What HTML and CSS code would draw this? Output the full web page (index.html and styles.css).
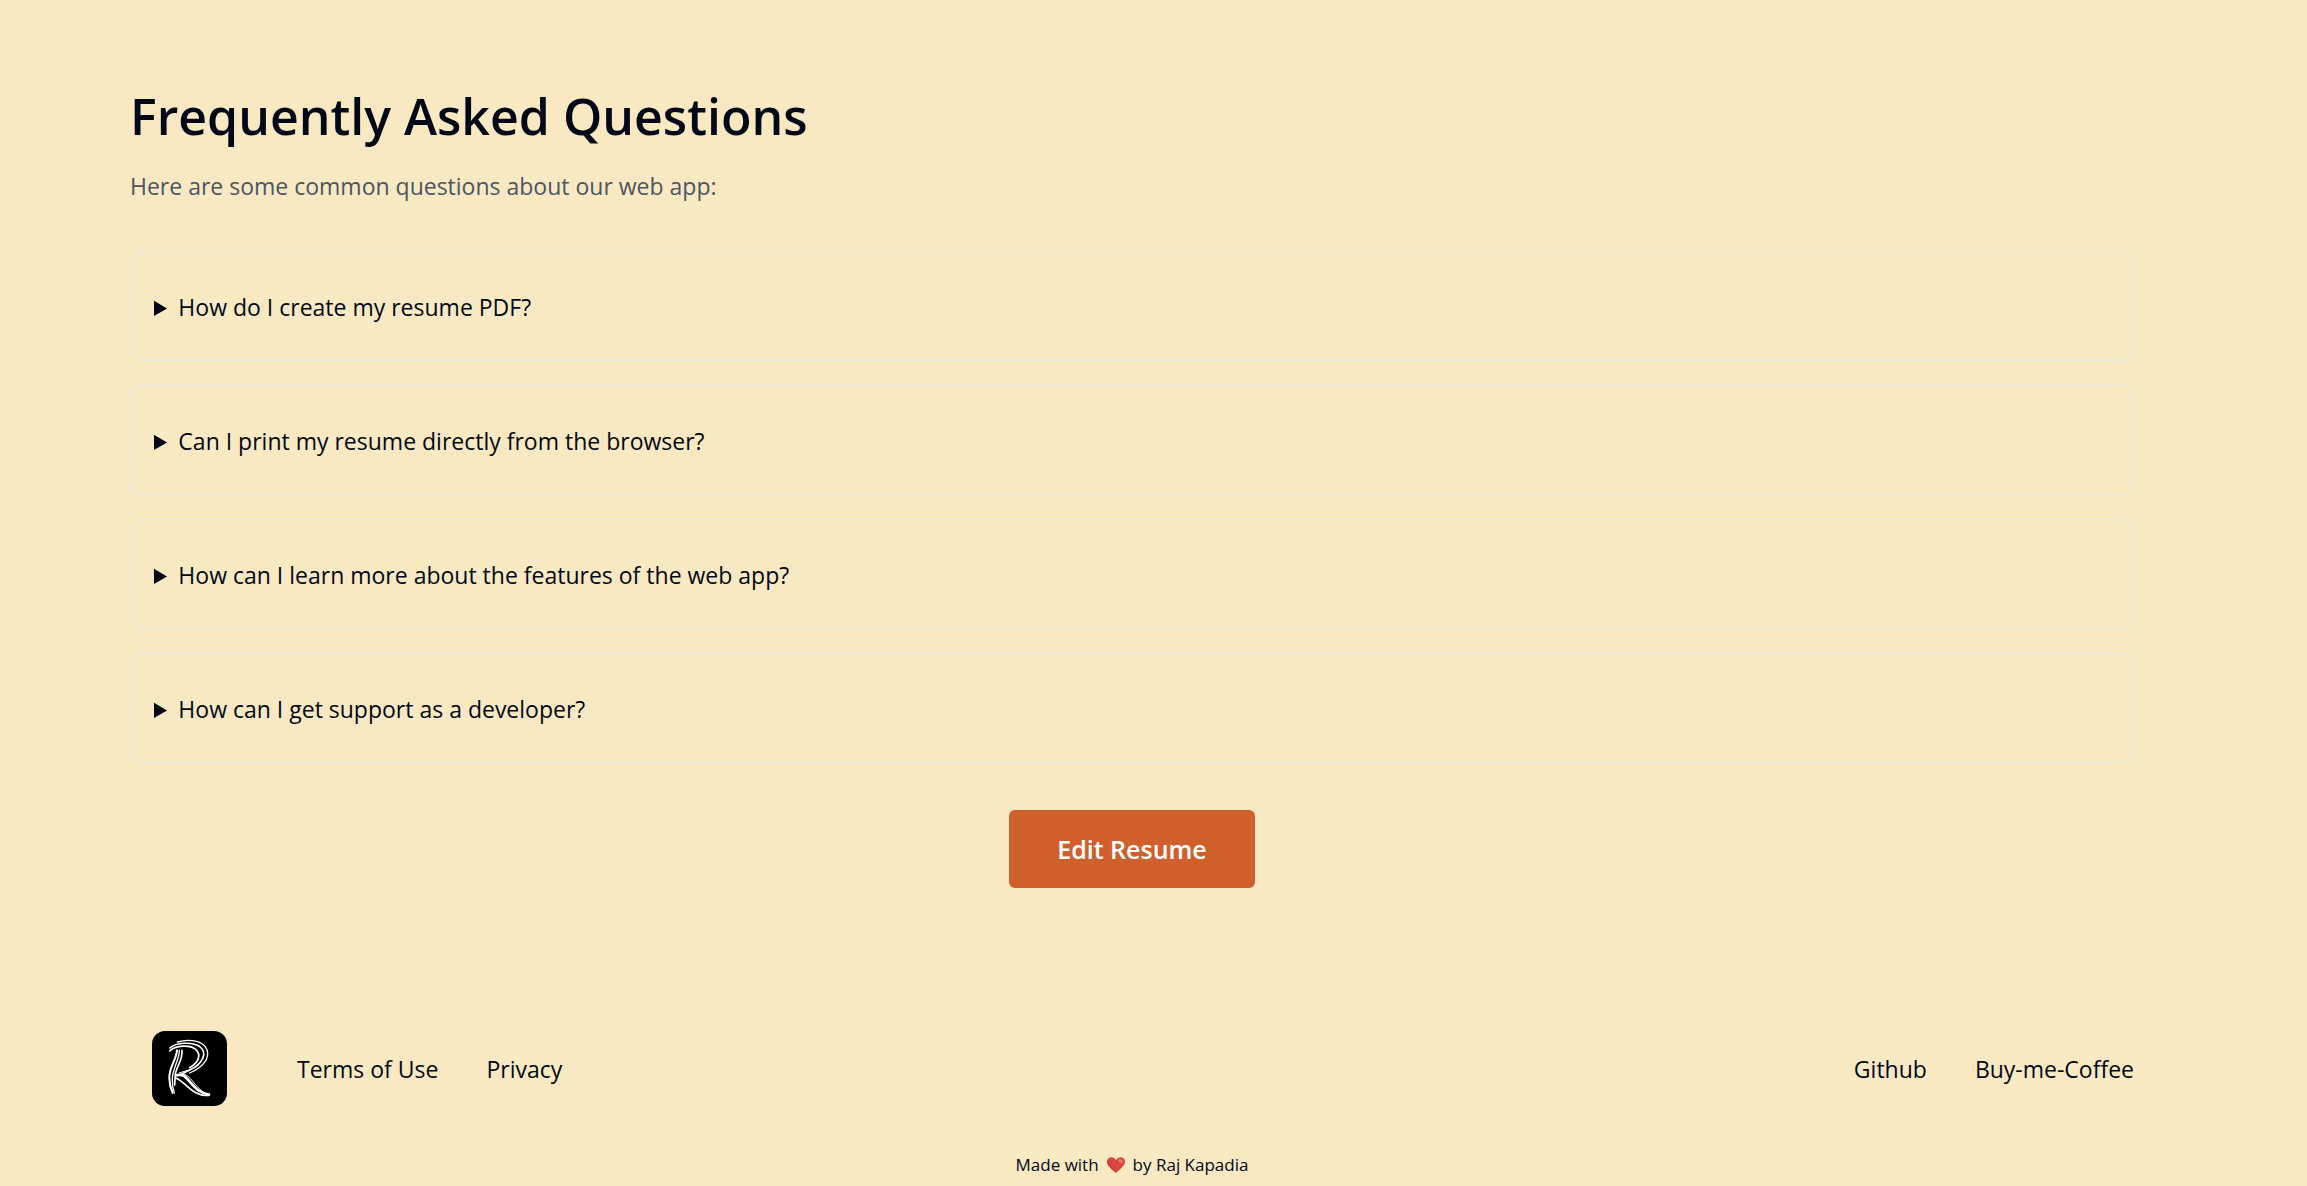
FILE: index.html
```html
<!DOCTYPE html>
<html lang="en">
<head>
<meta charset="utf-8">
<meta name="viewport" content="width=device-width, initial-scale=1">
<title>Frequently Asked Questions</title>
<link rel="stylesheet" href="styles.css">
</head>
<body>
<main class="faq">
  <h1 class="faq-title">Frequently Asked Questions</h1>
  <p class="faq-intro">Here are some common questions about our web app:</p>
  <div class="faq-list">
    <details class="card"><summary class="question">How do I create my resume PDF?</summary></details>
    <details class="card"><summary class="question">Can I print my resume directly from the browser?</summary></details>
    <details class="card"><summary class="question">How can I learn more about the features of the web app?</summary></details>
    <details class="card"><summary class="question">How can I get support as a developer?</summary></details>
  </div>
  <button class="edit-button" type="button">Edit Resume</button>
</main>
<footer class="footer">
  <div class="footer-row">
    <a class="logo" href="#" aria-label="Home">
      <svg class="logo-image" viewBox="36 36 225 225" aria-hidden="true">
        <rect x="36" y="36" width="225" height="225" rx="39" fill="#000"/>
        <g fill="none" stroke="#fff" stroke-linecap="round" stroke-linejoin="round">
          <path stroke-width="4" d="M112 69C150 58 190 66 201 92C210 119 188 146 149 162"/>
          <path stroke-width="5" d="M90 87C108 70 155 68 178 82C204 99 189 136 149 153L121 167"/>
          <path stroke-width="5" d="M89 96C108 78 150 77 167 91C186 108 174 132 149 146"/>
          <path stroke-width="6" d="M111 94C108 126 87 143 88 177C88 197 93 211 98 222"/>
          <path stroke-width="4" d="M118 94C118 124 98 147 97 179C96 196 100 213 103 222"/>
          <path stroke-width="5" d="M126 94C129 121 109 144 106 166L104 198"/>
          <path stroke-width="8" d="M109 169C130 163 137 174 151 190C169 210 181 223 207 227"/>
          <path stroke-width="5" d="M107 177C130 186 146 211 168 221C181 228 193 231 206 229"/>
          <path stroke-width="3" d="M127 163C147 168 157 187 171 202C179 211 187 218 195 222"/>
          <path stroke-width="3" d="M117 162L153 151"/>
        </g>
      </svg>
    </a>
    <nav class="links" aria-label="Legal">
      <a href="#">Terms of Use</a>
      <a href="#">Privacy</a>
    </nav>
    <nav class="links links-end" aria-label="Project">
      <a href="#">Github</a>
      <a href="#">Buy-me-Coffee</a>
    </nav>
  </div>
  <p class="credit">
    <span>Made with</span>
    <svg class="heart" viewBox="0 0 18 16" role="img" aria-label="love">
      <path fill="#d9453d" d="M9 16C6 13 0 9 0 4.600C0 2 2 .3 4.300.3C6.400.3 8 1.400 9 3.200C10 1.400 11.600.3 13.700.3C16 .3 18 2 18 4.600C18 9 12 13 9 16Z"/>
      <path fill="#b83a42" d="M.6 2.500C-1 7 3 11 9 16C5.500 11.500.8 8 .6 2.500Z"/>
      <ellipse cx="13.500" cy="4" rx="2.300" ry="1.600" fill="#f07b70" transform="rotate(35 13.500 4)"/>
    </svg>
    <span>by Raj Kapadia</span>
  </p>
</footer>
</body>
</html>
```
FILE: styles.css
```css
* {
  box-sizing: border-box;
}

body {
  margin: 0;
  padding: 80px 173px 0 130px;
  background: #f8e9c2;
  color: #020817;
  font-family: "Segoe UI", "Open Sans", "Noto Sans", sans-serif;
  font-size: 23px;
  line-height: 36px;
}

.faq {
  display: flex;
  flex-direction: column;
}

.faq-title {
  margin: 0;
  font-size: 50px;
  font-weight: 600;
  line-height: 72px;
}

.faq-intro {
  margin: 16px 0 47px;
  color: #4b5563;
}

.faq-list {
  display: flex;
  flex-direction: column;
  gap: 24px;
}

.card {
  padding: 37px 23px 35px;
  border: 1px solid #e5e7eb;
  border-radius: 12px;
}

.question {
  cursor: pointer;
}

.edit-button {
  align-self: center;
  margin-top: 47px;
  padding: 21px 48px;
  border: 0;
  border-radius: 6px;
  background: #cf602b;
  color: #fff;
  font: inherit;
  font-size: 25px;
  font-weight: 600;
  cursor: pointer;
}

.footer {
  padding-top: 143px;
}

.footer-row {
  display: flex;
  align-items: center;
  padding-left: 22px;
}

.logo {
  margin-right: 70px;
}

.logo-image {
  display: block;
  width: 75px;
  height: 75px;
}

.links {
  display: flex;
  gap: 48px;
}

.links a {
  color: inherit;
  text-decoration: none;
}

.links-end {
  margin-left: auto;
}

.credit {
  display: flex;
  justify-content: center;
  align-items: center;
  gap: 8px;
  margin: 45px 0 0;
  font-size: 17px;
  line-height: 27px;
}

.heart {
  width: 18px;
  height: 16px;
}
```
